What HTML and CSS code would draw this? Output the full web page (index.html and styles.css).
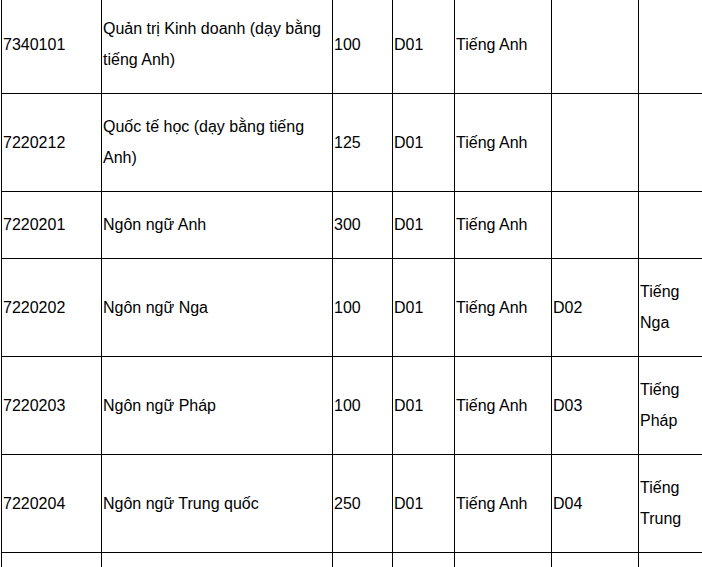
FILE: index.html
```html
<!DOCTYPE html>
<html lang="vi">
<head>
<meta charset="utf-8">
<title>Bảng ngành</title>
<link rel="stylesheet" href="styles.css">
</head>
<body>
<table class="grid">
  <colgroup>
    <col class="c1"><col class="c2"><col class="c3"><col class="c4"><col class="c5"><col class="c6"><col class="c7">
  </colgroup>
  <tbody>
    <tr class="tall">
      <td>7340101</td>
      <td>Quản trị Kinh doanh (dạy bằng tiếng Anh)</td>
      <td>100</td>
      <td>D01</td>
      <td>Tiếng Anh</td>
      <td></td>
      <td></td>
    </tr>
    <tr class="tall">
      <td>7220212</td>
      <td>Quốc tế học (dạy bằng tiếng Anh)</td>
      <td>125</td>
      <td>D01</td>
      <td>Tiếng Anh</td>
      <td></td>
      <td></td>
    </tr>
    <tr>
      <td>7220201</td>
      <td>Ngôn ngữ Anh</td>
      <td>300</td>
      <td>D01</td>
      <td>Tiếng Anh</td>
      <td></td>
      <td></td>
    </tr>
    <tr class="tall">
      <td>7220202</td>
      <td>Ngôn ngữ Nga</td>
      <td>100</td>
      <td>D01</td>
      <td>Tiếng Anh</td>
      <td>D02</td>
      <td>Tiếng Nga</td>
    </tr>
    <tr class="tall">
      <td>7220203</td>
      <td>Ngôn ngữ Pháp</td>
      <td>100</td>
      <td>D01</td>
      <td>Tiếng Anh</td>
      <td>D03</td>
      <td>Tiếng Pháp</td>
    </tr>
    <tr class="tall">
      <td>7220204</td>
      <td>Ngôn ngữ Trung quốc</td>
      <td>250</td>
      <td>D01</td>
      <td>Tiếng Anh</td>
      <td>D04</td>
      <td>Tiếng Trung</td>
    </tr>
    <tr class="tall">
      <td></td>
      <td></td>
      <td></td>
      <td></td>
      <td></td>
      <td></td>
      <td></td>
    </tr>
  </tbody>
</table>
</body>
</html>
```

FILE: styles.css
```css
html, body {
  margin: 0;
  padding: 0;
  background: #ffffff;
  overflow: hidden;
}

.grid {
  margin: -4px 0 0 1px;
  border-collapse: separate;
  border-spacing: 0;
  table-layout: fixed;
  width: 701px;
  border-left: 1px solid #000;
  font-family: "Liberation Sans", Arial, sans-serif;
  font-size: 16px;
  line-height: 31px;
  color: #000;
}

.c1 { width: 100px; }
.c2 { width: 231px; }
.c3 { width: 60px; }
.c4 { width: 62px; }
.c5 { width: 97px; }
.c6 { width: 87px; }
.c7 { width: 64px; }

.grid td {
  box-sizing: border-box;
  border-right: 1px solid #000;
  border-bottom: 1px solid #000;
  padding: 17px 1px 18px 1px;
  vertical-align: middle;
  text-align: left;
  height: 67px;
}

.grid tr.tall td {
  height: 98px;
}
```
